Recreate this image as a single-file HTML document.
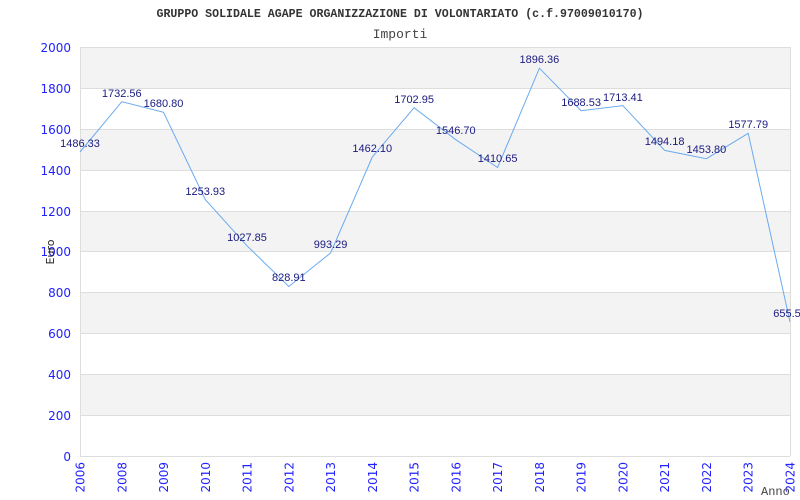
<!DOCTYPE html>
<html><head><meta charset="utf-8"><style>
html,body{margin:0;padding:0;background:#fff;width:800px;height:500px;overflow:hidden}
</style></head><body>
<svg width="800" height="500" xmlns="http://www.w3.org/2000/svg">
<rect width="800" height="500" fill="#fff"/>
<text x="400" y="17" text-anchor="middle" font-family="Liberation Mono, monospace" font-weight="bold" font-size="11.6" fill="#333">GRUPPO SOLIDALE AGAPE ORGANIZZAZIONE DI VOLONTARIATO (c.f.97009010170)</text>
<text x="400" y="38" text-anchor="middle" font-family="Liberation Mono, monospace" font-size="13" fill="#444">Importi</text>
<g fill="#f3f3f3">
<rect x="80" y="47" width="710" height="41"/>
<rect x="80" y="129" width="710" height="41"/>
<rect x="80" y="211" width="710" height="41"/>
<rect x="80" y="292" width="710" height="41"/>
<rect x="80" y="374" width="710" height="41"/>
</g>
<g stroke="#ddd" stroke-width="1">
<line x1="80" y1="47.5" x2="790" y2="47.5"/><line x1="80" y1="88.5" x2="790" y2="88.5"/>
<line x1="80" y1="129.5" x2="790" y2="129.5"/><line x1="80" y1="170.5" x2="790" y2="170.5"/>
<line x1="80" y1="211.5" x2="790" y2="211.5"/><line x1="80" y1="251.5" x2="790" y2="251.5"/>
<line x1="80" y1="292.5" x2="790" y2="292.5"/><line x1="80" y1="333.5" x2="790" y2="333.5"/>
<line x1="80" y1="374.5" x2="790" y2="374.5"/><line x1="80" y1="415.5" x2="790" y2="415.5"/>
<line x1="80" y1="456.5" x2="790" y2="456.5"/>
<line x1="80.5" y1="47" x2="80.5" y2="456"/><line x1="790.5" y1="47" x2="790.5" y2="456"/>
</g>
<g font-family="DejaVu Sans, sans-serif" font-size="12" fill="#2222ff" text-anchor="end">
<text x="71" y="52">2000</text><text x="71" y="93">1800</text><text x="71" y="134">1600</text>
<text x="71" y="175">1400</text><text x="71" y="216">1200</text><text x="71" y="256">1000</text>
<text x="71" y="297">800</text><text x="71" y="338">600</text><text x="71" y="379">400</text>
<text x="71" y="420">200</text><text x="71" y="461">0</text>
</g>
<text transform="translate(54,252) rotate(-90)" text-anchor="middle" font-family="DejaVu Sans, sans-serif" font-size="11" fill="#222">Euro</text>
<g font-family="DejaVu Sans, sans-serif" font-size="12" fill="#2222ff" text-anchor="end">
<text transform="translate(84.5,462) rotate(-90)">2006</text>
<text transform="translate(126.3,462) rotate(-90)">2008</text>
<text transform="translate(168,462) rotate(-90)">2009</text>
<text transform="translate(209.8,462) rotate(-90)">2010</text>
<text transform="translate(251.5,462) rotate(-90)">2011</text>
<text transform="translate(293.3,462) rotate(-90)">2012</text>
<text transform="translate(335.1,462) rotate(-90)">2013</text>
<text transform="translate(376.8,462) rotate(-90)">2014</text>
<text transform="translate(418.6,462) rotate(-90)">2015</text>
<text transform="translate(460.3,462) rotate(-90)">2016</text>
<text transform="translate(502.1,462) rotate(-90)">2017</text>
<text transform="translate(543.9,462) rotate(-90)">2018</text>
<text transform="translate(585.6,462) rotate(-90)">2019</text>
<text transform="translate(627.4,462) rotate(-90)">2020</text>
<text transform="translate(669.1,462) rotate(-90)">2021</text>
<text transform="translate(710.9,462) rotate(-90)">2022</text>
<text transform="translate(752.7,462) rotate(-90)">2023</text>
<text transform="translate(794.5,462) rotate(-90)">2024</text>
</g>
<text x="761" y="495" font-family="Liberation Mono, monospace" font-size="12" fill="#444">Anno</text>
<polyline fill="none" stroke="#6aaaf0" stroke-width="1" points="80,152 121.8,101.7 163.5,112.3 205.3,199.6 247,245.8 288.8,286.5 330.6,252.9 372.3,157 414.1,107.7 455.8,139.7 497.6,167.5 539.4,68.2 581.1,110.7 622.9,105.6 664.6,150.4 706.4,158.7 748.2,133.3 790,321.9"/>
<g font-family="Liberation Sans, Arial, sans-serif" font-size="11" fill="#1a1a80" text-anchor="middle">
<text x="80" y="147">1486.33</text>
<text x="121.8" y="97">1732.56</text>
<text x="163.5" y="107">1680.80</text>
<text x="205.3" y="195">1253.93</text>
<text x="247" y="241">1027.85</text>
<text x="288.8" y="281">828.91</text>
<text x="330.6" y="248">993.29</text>
<text x="372.3" y="152">1462.10</text>
<text x="414.1" y="103">1702.95</text>
<text x="455.8" y="134">1546.70</text>
<text x="497.6" y="162">1410.65</text>
<text x="539.4" y="63">1896.36</text>
<text x="581.1" y="106">1688.53</text>
<text x="622.9" y="101">1713.41</text>
<text x="664.6" y="145">1494.18</text>
<text x="706.4" y="153">1453.80</text>
<text x="748.2" y="128">1577.79</text>
<text x="787" y="317">655.5</text>
</g>
</svg>
</body></html>
